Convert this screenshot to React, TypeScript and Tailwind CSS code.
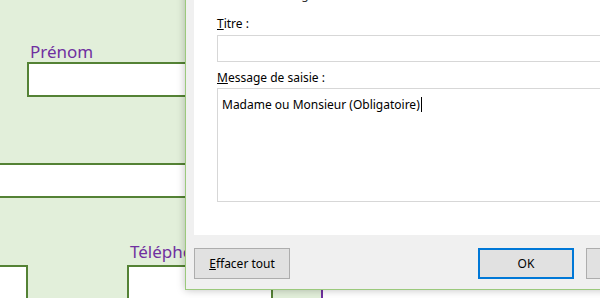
import React from 'react';

const font = { fontFamily: '"Noto Sans", "Open Sans", sans-serif' };

const SheetBackground: React.FC = () => {
  return (
    <div className="h-full w-full bg-[#e2efda]">
      <div className="pt-[42px] pl-[30px] text-[17px] leading-[20px] text-[#7030a0]">Prénom</div>
      <div className="ml-[27px] h-[35px] w-[300px] border-2 border-[#548235] bg-white" />
      <div className="mt-[66px] h-[35px] border-y-2 border-[#548235] bg-white" />
      <div className="mt-[44px] pl-[130px] text-[17px] leading-[20px] text-[#7030a0]">Téléphone</div>
      <div className="mt-[3px] flex h-[40px]">
        <div className="w-[28px] border-t-2 border-r-2 border-[#548235] bg-white" />
        <div className="ml-[99px] w-[146px] border-x-2 border-t-2 border-[#548235] bg-white" />
        <div className="ml-[48px] flex-1 border-l-2 border-t-2 border-l-[#7030a0] border-t-[#548235] bg-white" />
      </div>
    </div>
  );
};

const DialogButton: React.FC<{ children: React.ReactNode; primary?: boolean }> = ({ children, primary }) => {
  return (
    <button
      className={
        primary
          ? 'h-[31px] w-[96px] border-2 border-[#0078d7] bg-[#e1e1e1] text-[12px] text-black'
          : 'h-[31px] w-[96px] border border-[#adadad] bg-[#e1e1e1] text-[12px] text-black'
      }
    >
      {children}
    </button>
  );
};

const InputMessageDialog: React.FC = () => {
  return (
    <div className="absolute left-[185px] top-[-24px] bottom-[8px] flex w-[506px] flex-col border border-[#9bc97c] bg-[#f0f0f0] text-[12px] leading-[16px] text-black shadow-[0_0_8px_rgba(0,0,0,0.25)]">
      <div className="ml-[8px] mr-[8px] flex flex-1 flex-col bg-white">
        <div className="mt-[10px] pl-[11px] text-[#333]">Afficher le message de saisie suivant :</div>
        <div className="mt-[13px] pl-[23px]">
          <u>T</u>itre :
        </div>
        <div className="ml-[23px] mt-[3px] h-[27px] border border-[#d7d7d7] bg-white" />
        <div className="mt-[8px] pl-[23px]">
          <u>M</u>essage de saisie :
        </div>
        <div className="ml-[23px] mt-[2px] h-[114px] border border-[#d7d7d7] bg-white px-[4px] pt-[5px]">
          <span>Madame ou Monsieur (Obligatoire)</span>
          <span className="ml-[1px] inline-block h-[15px] w-px translate-y-[3px] bg-black" />
        </div>
      </div>
      <div className="flex items-start px-[8px] pt-[13px] pb-[10px]">
        <DialogButton>
          <u>E</u>ffacer tout
        </DialogButton>
        <div className="flex-1" />
        <DialogButton primary>OK</DialogButton>
        <div className="w-[12px]" />
        <DialogButton>Annuler</DialogButton>
      </div>
    </div>
  );
};

export default function App() {
  return (
    <div className="relative h-[298px] w-[600px] overflow-hidden" style={font}>
      <SheetBackground />
      <InputMessageDialog />
    </div>
  );
}
